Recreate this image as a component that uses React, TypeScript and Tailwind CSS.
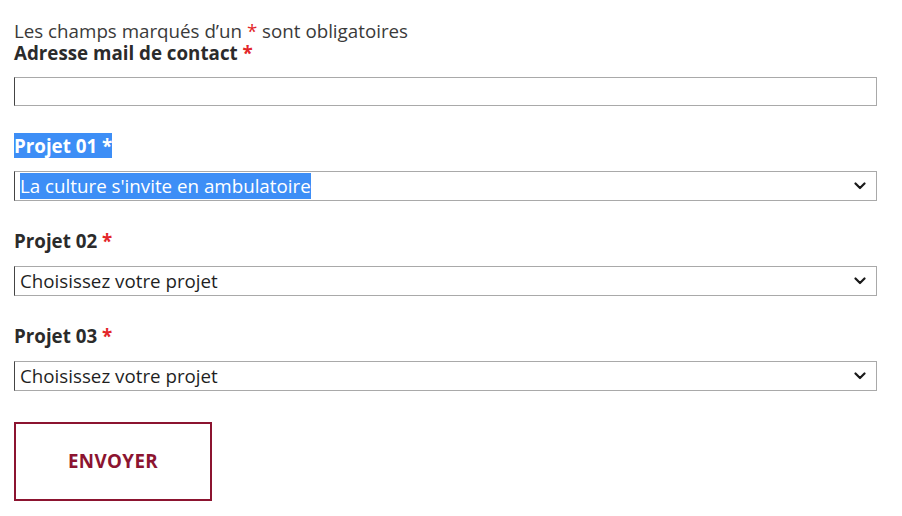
import React from 'react';

const Chevron: React.FC = () => (
  <svg width="12" height="8" viewBox="0 0 12 8" className="shrink-0">
    <path d="M1.5 1.5 L6 6 L10.5 1.5" fill="none" stroke="#1a1a1a" strokeWidth="2.2" strokeLinecap="round" strokeLinejoin="round" />
  </svg>
);

const Star: React.FC = () => <span className="text-[#e3262a]">*</span>;

const fieldBox = 'w-full border border-[#a9a9a9] border-l-[#444] bg-white flex items-center';

const SelectField: React.FC<{ label: string; value: string; selected?: boolean }> = ({ label, value, selected }) => (
  <div className="mt-[27px]">
    <div className="text-[18.75px] font-bold leading-[26px] text-[#2b2b2b] h-[26px]">
      {selected ? (
        <span className="bg-[#3d8ef6] text-white">{label} *</span>
      ) : (
        <>
          {label} <Star />
        </>
      )}
    </div>
    <div className={`${fieldBox} h-[30px] mt-[12px] pl-[5px] pr-[10px] justify-between`}>
      <span className={`text-[18.75px] leading-[26px] ${selected ? 'bg-[#3d8ef6] text-white' : 'text-[#1f1f1f]'}`}>{value}</span>
      <Chevron />
    </div>
  </div>
);

const App: React.FC = () => {
  return (
    <div className="min-h-screen bg-white px-[14px] pt-[20px] pr-[25px]" style={{ fontFamily: '"Open Sans", sans-serif' }}>
      <p className="text-[18.75px] leading-[22px] text-[#3a3a3a]">
        Les champs marqués d’un <Star /> sont obligatoires
      </p>
      <div className="text-[18.75px] font-bold leading-[22px] text-[#2b2b2b]">
        Adresse mail de contact <Star />
      </div>
      <div className={`${fieldBox} mt-[13px] h-[29px]`} />

      <SelectField label="Projet 01" value="La culture s'invite en ambulatoire" selected />
      <SelectField label="Projet 02" value="Choisissez votre projet" />
      <SelectField label="Projet 03" value="Choisissez votre projet" />

      <button className="mt-[31px] w-[198px] h-[79px] border-2 border-[#8c1430] bg-white text-[#8c1430] text-[18.75px] font-bold tracking-[0.02em]">
        ENVOYER
      </button>
    </div>
  );
};

export default App;
